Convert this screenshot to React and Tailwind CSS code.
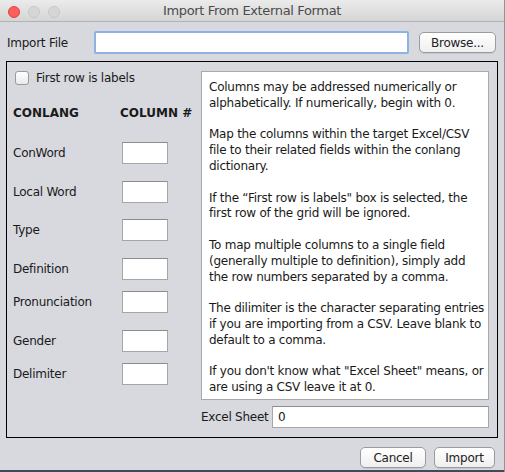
import React from 'react';

const font = { fontFamily: '"DejaVu Sans", "Liberation Sans", sans-serif' };

const fields = [
  { label: 'ConWord', mt: 'mt-[21px]' },
  { label: 'Local Word', mt: 'mt-[17px]' },
  { label: 'Type', mt: 'mt-[16px]' },
  { label: 'Definition', mt: 'mt-[17px]' },
  { label: 'Pronunciation', mt: 'mt-[11px]' },
  { label: 'Gender', mt: 'mt-[17px]' },
  { label: 'Delimiter', mt: 'mt-[11px]' },
];

const helpText = [
  'Columns may be addressed numerically or',
  'alphabetically. If numerically, begin with 0.',
  '',
  'Map the columns within the target Excel/CSV',
  'file to their related fields within the conlang',
  'dictionary.',
  '',
  'If the \u201cFirst row is labels" box is selected, the',
  'first row of the grid will be ignored.',
  '',
  'To map multiple columns to a single field',
  '(generally multiple to definition), simply add',
  'the row numbers separated by a comma.',
  '',
  'The dilimiter is the character separating entries',
  'if you are importing from a CSV. Leave blank to',
  'default to a comma.',
  '',
  'If you don\'t know what "Excel Sheet" means, or',
  'are using a CSV leave it at 0.',
];

const MacButton = ({ children, className = '' }) => (
  <button
    type="button"
    className={`h-[21px] rounded-[5px] border border-[#9b9b9b] bg-gradient-to-b from-white to-[#efefef] text-[12px] tracking-[-0.25px] text-[#222] shadow-[0_1px_0_rgba(0,0,0,0.08)] ${className}`}
  >
    {children}
  </button>
);

const App = () => {
  return (
    <div
      className="relative flex h-[472px] w-[505px] flex-col overflow-hidden border-r border-[#8f9297] bg-[#d7d9df] text-[12px] tracking-[-0.25px] text-[#1a1a1a]"
      style={font}
    >
      {/* Title bar */}
      <div className="relative flex h-[22px] shrink-0 items-center justify-center border-b border-[#b2b2b2] bg-gradient-to-b from-[#ebebeb] to-[#d5d5d5]">
        <div className="absolute left-[8px] top-[6px] flex gap-[8px]">
          <span className="h-[12px] w-[12px] rounded-full border border-[#e0443e] bg-[#fc605c]" />
          <span className="h-[12px] w-[12px] rounded-full border border-[#c8c8c8] bg-[#d6d6d6]" />
          <span className="h-[12px] w-[12px] rounded-full border border-[#c8c8c8] bg-[#d6d6d6]" />
        </div>
        <span className="text-[13px] tracking-[-0.35px] text-[#4b4b4b]">Import From External Format</span>
      </div>

      {/* Import file row */}
      <div className="mt-[9px] flex h-[23px] items-center">
        <span className="ml-[7px] w-[87px]">Import File</span>
        <div className="h-[23px] w-[315px] rounded-[2px] border-2 border-[#8cb3e1] bg-white" />
        <MacButton className="ml-[10px] w-[77px]">Browse...</MacButton>
      </div>

      {/* Main panel */}
      <div className="mx-[6px] mt-[7px] flex h-[377px] w-[492px] border border-black">
        {/* Left mapping column */}
        <div className="flex w-[194px] flex-col">
          <div className="mt-[9px] flex h-[14px] items-center">
            <span className="ml-[8px] h-[14px] w-[14px] rounded-[3px] border border-[#9a9a9a] bg-gradient-to-b from-white to-[#eaeaea]" />
            <span className="ml-[7px]">First row is labels</span>
          </div>
          <div className="mt-[20px] flex h-[16px] items-center font-bold tracking-normal">
            <span className="ml-[6px] w-[107px]">CONLANG</span>
            <span>COLUMN #</span>
          </div>
          {fields.map((f) => (
            <div key={f.label} className={`flex h-[22px] items-center ${f.mt}`}>
              <span className="ml-[6px] w-[109px]">{f.label}</span>
              <div className="h-[22px] w-[46px] border border-[#a6a6a6] border-t-[#8c8c8c] bg-white" />
            </div>
          ))}
        </div>

        {/* Right help column */}
        <div className="flex flex-1 flex-col">
          <div className="mt-[9px] h-[329px] w-[288px] border border-[#a9a9a9] bg-white pl-[7px] pt-[8px] leading-[15.8px]">
            {helpText.map((line, i) => (
              <div key={i} className="h-[15.8px] whitespace-nowrap">
                {line}
              </div>
            ))}
          </div>
          <div className="mt-[6px] flex h-[22px] items-center">
            <span className="w-[71px] whitespace-nowrap">Excel Sheet</span>
            <div className="flex h-[22px] w-[217px] items-center border border-[#a6a6a6] border-t-[#8c8c8c] bg-white pl-[5px]">
              0
            </div>
          </div>
        </div>
      </div>

      {/* Bottom buttons */}
      <div className="mt-[9px] flex justify-end pr-[9px]">
        <MacButton className="w-[66px]">Cancel</MacButton>
        <MacButton className="ml-[8px] w-[61px]">Import</MacButton>
      </div>

      <div className="absolute bottom-0 left-0 h-[2px] w-full bg-[#3e4b5c]" />
    </div>
  );
};

export default App;
